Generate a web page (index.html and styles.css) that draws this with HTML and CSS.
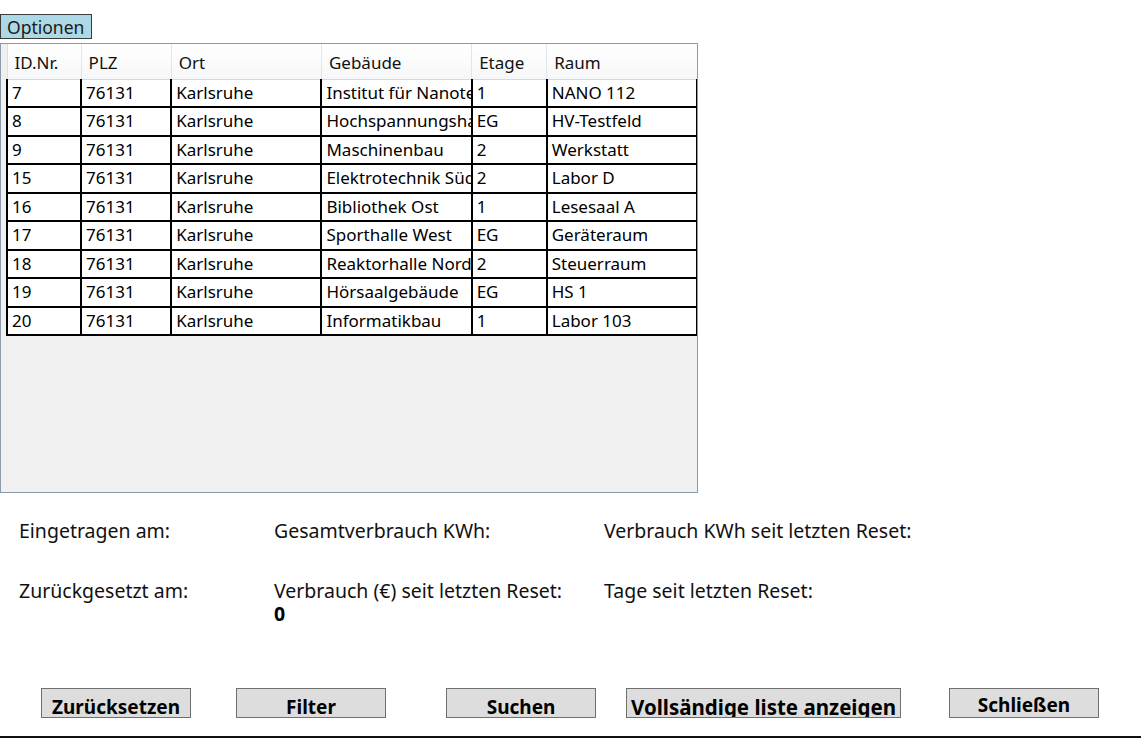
FILE: index.html
```html
<!DOCTYPE html>
<html>
<head>
<meta charset="utf-8">
<link rel="stylesheet" href="styles.css">
</head>
<body>
<div class="window">
  <div class="menu"><span class="menu-item">Optionen</span></div>
  <div class="grid">
    <table class="data">
      <colgroup>
        <col class="c-rh"><col class="c-id"><col class="c-plz"><col class="c-ort"><col class="c-geb"><col class="c-etage"><col class="c-raum">
      </colgroup>
      <thead>
        <tr><th class="rh"></th><th>ID.Nr.</th><th>PLZ</th><th>Ort</th><th>Gebäude</th><th>Etage</th><th>Raum</th></tr>
      </thead>
      <tbody>
        <tr><td class="rh"></td><td>7</td><td>76131</td><td>Karlsruhe</td><td><div class="clip">Institut für Nanotechnologie</div></td><td>1</td><td>NANO 112</td></tr>
        <tr><td class="rh"></td><td>8</td><td>76131</td><td>Karlsruhe</td><td><div class="clip">Hochspannungshalle</div></td><td>EG</td><td>HV-Testfeld</td></tr>
        <tr><td class="rh"></td><td>9</td><td>76131</td><td>Karlsruhe</td><td><div class="clip">Maschinenbau</div></td><td>2</td><td>Werkstatt</td></tr>
        <tr><td class="rh"></td><td>15</td><td>76131</td><td>Karlsruhe</td><td><div class="clip">Elektrotechnik Süd</div></td><td>2</td><td>Labor D</td></tr>
        <tr><td class="rh"></td><td>16</td><td>76131</td><td>Karlsruhe</td><td><div class="clip">Bibliothek Ost</div></td><td>1</td><td>Lesesaal A</td></tr>
        <tr><td class="rh"></td><td>17</td><td>76131</td><td>Karlsruhe</td><td><div class="clip">Sporthalle West</div></td><td>EG</td><td>Geräteraum</td></tr>
        <tr><td class="rh"></td><td>18</td><td>76131</td><td>Karlsruhe</td><td><div class="clip">Reaktorhalle Nord</div></td><td>2</td><td>Steuerraum</td></tr>
        <tr><td class="rh"></td><td>19</td><td>76131</td><td>Karlsruhe</td><td><div class="clip">Hörsaalgebäude</div></td><td>EG</td><td>HS 1</td></tr>
        <tr><td class="rh"></td><td>20</td><td>76131</td><td>Karlsruhe</td><td><div class="clip">Informatikbau</div></td><td>1</td><td>Labor 103</td></tr>
      </tbody>
    </table>
  </div>
  <div class="info">
    <div class="info-cell">Eingetragen am:</div>
    <div class="info-cell">Gesamtverbrauch KWh:</div>
    <div class="info-cell">Verbrauch KWh seit letzten Reset:</div>
    <div class="info-cell">Zurückgesetzt am:</div>
    <div class="info-cell">Verbrauch (€) seit letzten Reset:<div class="value">0</div></div>
    <div class="info-cell">Tage seit letzten Reset:</div>
  </div>
  <div class="buttons">
    <button class="btn b1">Zurücksetzen</button>
    <button class="btn b2">Filter</button>
    <button class="btn b3">Suchen</button>
    <button class="btn b4">Vollsändige liste anzeigen</button>
    <button class="btn b5">Schließen</button>
  </div>
  <div class="bottom-line"></div>
</div>
</body>
</html>
```
FILE: styles.css
```css
html, body {
  margin: 0;
  padding: 0;
  background: #ffffff;
}
body {
  font-family: "Noto Sans", "Open Sans", sans-serif;
  color: #000;
  width: 1141px;
  height: 738px;
  overflow: hidden;
}
.window {
  display: flex;
  flex-direction: column;
  height: 738px;
}
.window > * {
  flex-shrink: 0;
}
.menu {
  padding-top: 14px;
  height: 25px;
  display: flex;
}
.menu-item {
  box-sizing: border-box;
  width: 92px;
  height: 25px;
  background: #add8e6;
  border: 1px solid #3c3c3c;
  font-size: 17.5px;
  line-height: 25px;
  padding-left: 6px;
  color: #1a1a1a;
}
.grid {
  box-sizing: border-box;
  margin-top: 4px;
  width: 698px;
  height: 450px;
  border: 1px solid #8b9bab;
  background: #f0f0f0;
  overflow: hidden;
}
.data {
  border-collapse: collapse;
  table-layout: fixed;
  width: 697px;
  font-size: 17px;
}
.c-rh { width: 6px; }
.c-id { width: 74px; }
.c-plz { width: 90px; }
.c-ort { width: 150px; }
.c-geb { width: 150px; }
.c-etage { width: 75px; }
.c-raum { width: 150px; }
.data th {
  height: 35px;
  box-sizing: border-box;
  padding: 2px 0 0 7px;
  text-align: left;
  font-weight: normal;
  background: linear-gradient(#ffffff, #f6f7f8);
  border-right: 1px solid #e3e5e8;
  border-bottom: 1px solid #d5d8dc;
  white-space: nowrap;
  overflow: hidden;
  color: #111;
}
.data td {
  height: 26.5px;
  padding: 0 0 0 4px;
  background: #ffffff;
  border: 2px solid #000;
  border-top-width: 0;
  white-space: nowrap;
  overflow: hidden;
  line-height: 26px;
}
.clip {
  overflow: hidden;
  white-space: nowrap;
}
.data tbody tr:first-child td {
  border-top-width: 1px;
}
.data th.rh, .data td.rh {
  background: #f0f0f0;
  border: none;
  border-right: 1px solid #e0e0e0;
  padding: 0;
}
.info {
  display: grid;
  grid-template-columns: 255px 330px 1fr;
  grid-template-rows: 60px 90px;
  padding: 26px 0 0 19px;
  font-size: 19.5px;
  line-height: 24px;
  color: #111;
}
.value {
  font-weight: bold;
  line-height: 20px;
  margin-top: 1px;
  color: #000;
}
.buttons {
  display: flex;
  align-items: flex-start;
  padding-top: 19px;
  height: 30px;
}
.btn {
  box-sizing: border-box;
  height: 30px;
  background: #dddddd;
  border: 1px solid #707070;
  font-family: "Noto Sans", sans-serif;
  font-weight: bold;
  font-size: 19px;
  padding: 6px 0 0 0;
  line-height: 24px;
  overflow: hidden;
  color: #000;
  text-align: center;
  white-space: nowrap;
}
.b1 { margin-left: 41px; width: 150px; }
.b2 { margin-left: 45px; width: 150px; }
.b3 { margin-left: 60px; width: 150px; }
.b4 { margin-left: 30px; width: 275px; font-size: 20.5px; padding-top: 6px; }
.b5 { margin-left: 48px; width: 150px; padding-top: 3px; }
.bottom-line {
  margin-top: auto;
  height: 2px;
  background: #111;
}
```
